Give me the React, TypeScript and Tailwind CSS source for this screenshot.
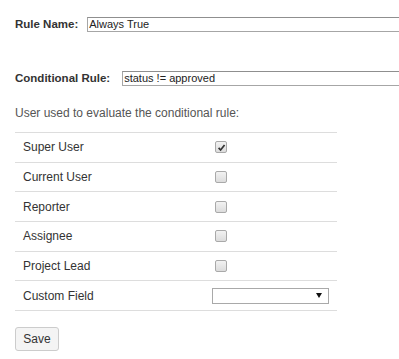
import React from 'react';

const rows: { label: string; checked?: boolean; select?: boolean }[] = [
  { label: 'Super User', checked: true },
  { label: 'Current User' },
  { label: 'Reporter' },
  { label: 'Assignee' },
  { label: 'Project Lead' },
  { label: 'Custom Field', select: true },
];

const Checkbox: React.FC<{ checked?: boolean }> = ({ checked }) => (
  <div className="ml-[3px] w-[12px] h-[12px] rounded-[2px] border border-[#a9a9a9] bg-gradient-to-b from-[#f2f2f2] to-[#dcdcdc] flex items-center justify-center">
    {checked && (
      <svg width="9" height="9" viewBox="0 0 10 10">
        <path d="M1.8 5.4 L4 7.8 L8.4 2.2" fill="none" stroke="#333" strokeWidth="1.9" />
      </svg>
    )}
  </div>
);

const App: React.FC = () => {
  return (
    <div className="w-[399px] h-[359px] overflow-hidden bg-white pl-[15px] font-['Liberation_Sans',Arial,sans-serif] text-[#333]">
      {/* rule name */}
      <div className="mt-[17px] flex items-center h-[15px] whitespace-nowrap">
        <span className="shrink-0 text-[11.5px] font-bold text-[#333] mr-[9px] leading-none">Rule Name:</span>
        <div className="h-[15px] w-[330px] shrink-0 border border-[#a6a6a6] border-t-[#8f8f8f] px-[1px] text-[11px] leading-[13px] text-[#222]">
          Always True
        </div>
      </div>

      {/* conditional rule */}
      <div className="mt-[39px] flex items-center h-[15px] whitespace-nowrap">
        <span className="shrink-0 text-[11.5px] font-bold text-[#333] mr-[12px] leading-none">Conditional Rule:</span>
        <div className="h-[15px] w-[300px] shrink-0 border border-[#a6a6a6] border-t-[#8f8f8f] px-[1px] text-[11px] leading-[13px] text-[#222]">
          status != approved
        </div>
      </div>

      <div className="mt-[20px] h-[14px] text-[12px] leading-[14px] text-[#555]">
        User used to evaluate the conditional rule:
      </div>

      <div className="mt-[12px] w-[322px] border-b border-[#dddddd]">
        {rows.map((r) => (
          <div key={r.label} className="h-[29.67px] border-t border-[#dddddd] flex items-center">
            <div className="w-[197px] pl-[8px] text-[12px] text-[#333]">{r.label}</div>
            {r.select ? (
              <div className="w-[117px] h-[16px] border border-[#a9a9a9] bg-white flex items-center justify-end pr-[6px]">
                <svg width="6" height="5" viewBox="0 0 6 5">
                  <path d="M0 0 H6 L3 5 Z" fill="#111" />
                </svg>
              </div>
            ) : (
              <Checkbox checked={r.checked} />
            )}
          </div>
        ))}
      </div>

      <button className="mt-[16px] w-[44px] h-[24px] border border-[#cccccc] rounded-[3px] bg-[#f4f4f4] text-[12px] text-[#333] flex items-center justify-center">
        Save
      </button>
    </div>
  );
};

export default App;
